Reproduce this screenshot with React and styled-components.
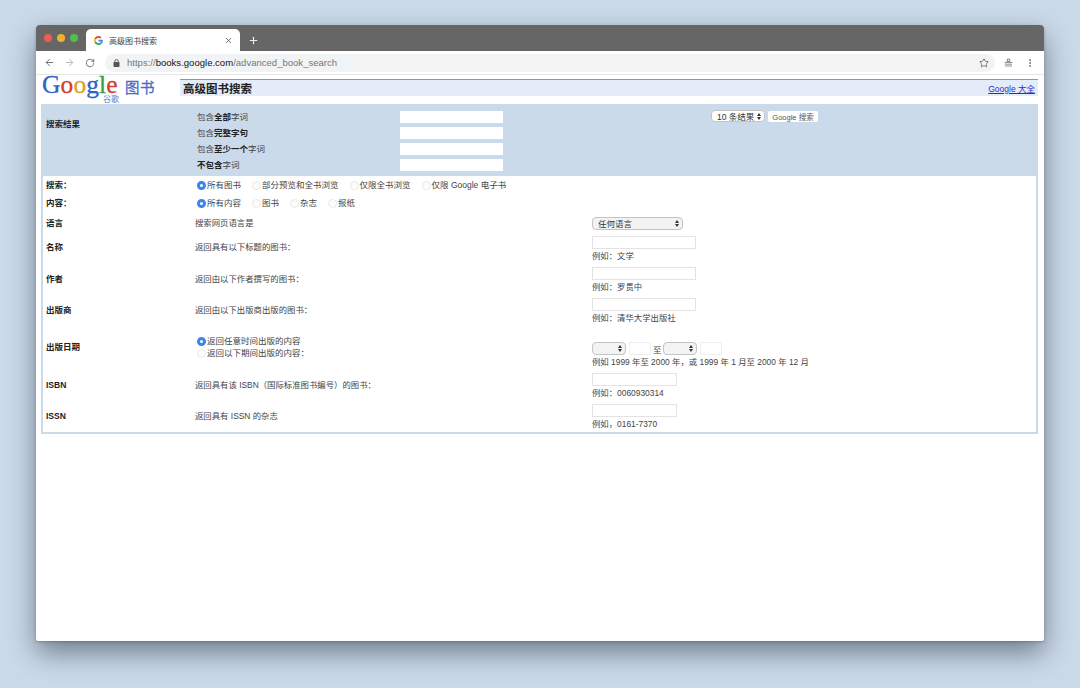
import React from "react";
import styled, { createGlobalStyle } from "styled-components";
import { ArrowLeft, ArrowRight, RotateCw, Star, X, Plus, EllipsisVertical } from "lucide-react";

const GlobalStyle = createGlobalStyle`
  html, body {
    margin: 0;
    height: 688px;
    overflow: hidden;
    background: #cbdae9;
    font-family: "Liberation Sans", "Noto Sans CJK SC", sans-serif;
  }
`;

const Page = styled.div`
  padding: 25px 36px 0;
`;

const Window = styled.div`
  width: 1008px;
  height: 616px;
  background: #fff;
  border-radius: 4px 4px 2px 2px;
  overflow: hidden;
  box-shadow: 0 12px 28px rgba(40, 50, 65, 0.55), 0 1px 3px rgba(40, 50, 65, 0.3);
`;

const TitleBar = styled.div`
  height: 26px;
  background: #666;
  display: flex;
  align-items: flex-end;
`;

const Lights = styled.div`
  width: 50px;
  height: 26px;
  display: flex;
  align-items: center;
  gap: 5px;
  padding: 0 0 0 8px;
  box-sizing: border-box;
`;

const Light = styled.span`
  width: 8px;
  height: 8px;
  border-radius: 50%;
  background: ${(props) => props.$color};
`;

const Tab = styled.div`
  width: 154px;
  height: 22px;
  background: #fff;
  border-radius: 5px 5px 0 0;
  display: flex;
  align-items: center;
  padding: 0 7px 0 8px;
  box-sizing: border-box;
  font-size: 8px;
  color: #444;
`;

const TabTitle = styled.span`
  flex: 1;
  margin-left: 6px;
`;

const NewTab = styled.div`
  width: 26px;
  height: 22px;
  display: flex;
  align-items: center;
  justify-content: center;
  color: #eee;
`;

const Toolbar = styled.div`
  height: 24px;
  background: #fff;
  display: flex;
  align-items: center;
  padding-left: 8px;
  border-bottom: 1px solid #e6e6e6;
  box-sizing: border-box;
  color: #666;
`;

const NavButton = styled.span`
  width: ${(props) => props.$w}px;
  display: flex;
  color: ${(props) => props.$color || "#666"};
`;

const Omnibox = styled.div`
  width: 890px;
  height: 18px;
  border-radius: 9px;
  background: #f1f3f4;
  display: flex;
  align-items: center;
  padding: 0 6px 0 8px;
  box-sizing: border-box;
  font-size: 9.5px;
  color: #777;
`;

const Url = styled.span`
  flex: 1;
  margin-left: 7px;
  letter-spacing: 0.02px;
  b {
    font-weight: 400;
    color: #111;
  }
`;

const ToolIcons = styled.div`
  display: flex;
  align-items: center;
  margin-left: 9px;
  gap: 12px;
  color: #666;
`;

const Content = styled.div`
  padding: 3px 6px 0 5px;
`;

const Header = styled.div`
  height: 26px;
  display: flex;
  align-items: flex-start;
`;

const Logo = styled.div`
  width: 138px;
  height: 26px;
  display: flex;
  align-items: flex-start;
  position: relative;
  margin-left: 1px;
`;

const LogoWord = styled.span`
  font-family: "Liberation Serif", serif;
  font-size: 25.5px;
  line-height: 14px;
  letter-spacing: 0.1px;
  width: 83px;
  -webkit-text-stroke: 0.3px;
`;

const LogoLetter = styled.span`
  color: ${(props) => props.$color};
`;

const LogoBooks = styled.span`
  font-size: 14.5px;
  line-height: 20px;
  letter-spacing: 0.5px;
  color: #4a6cc4;
  -webkit-text-stroke: 0.3px;
`;

const LogoSub = styled.span`
  position: absolute;
  left: 61px;
  top: 17px;
  font-size: 8px;
  line-height: 9px;
  color: #4a7fc9;
`;

const TitleBox = styled.div`
  flex: 1;
  height: 17px;
  margin-top: 1px;
  background: #e5ecf9;
  border-top: 1px solid #7d9ac8;
  box-sizing: border-box;
  display: flex;
  align-items: center;
  justify-content: space-between;
  padding: 0 3px 0 3px;
`;

const PageTitle = styled.h1`
  margin: 0;
  font-size: 11.5px;
  font-weight: 700;
  color: #222;
`;

const AllLink = styled.a`
  font-size: 8.5px;
  color: #2a2ad0;
  text-decoration: underline;
`;

const FormBox = styled.div`
  height: 330px;
  border: 2px solid #cbdaea;
  border-top: 0;
  box-sizing: border-box;
`;

const ResultPanel = styled.div`
  height: 72px;
  background: #cbdaea;
  display: grid;
  grid-template-columns: 151px 203px 311px 1fr;
  padding: 5px 0 0 3px;
  box-sizing: border-box;
`;

const PanelTitle = styled.div`
  font-size: 8.5px;
  font-weight: 700;
  line-height: 16px;
  color: #222;
  padding-top: 7px;
`;

const Stack = styled.div`
  display: flex;
  flex-direction: column;
  gap: ${(props) => props.$gap || 0}px;
  padding-top: ${(props) => props.$top || 0}px;
  padding-left: ${(props) => props.$left || 0}px;
`;

const PanelLabel = styled.div`
  height: 16px;
  font-size: 8.5px;
  line-height: 16px;
  color: #444;
  b {
    color: #222;
  }
`;

const PanelInput = styled.input`
  display: block;
  width: 103px;
  height: 12px;
  padding: 0;
  border: 0;
  background: #fff;
`;

const SearchControls = styled.div`
  display: flex;
  align-items: flex-start;
  gap: 3px;
  padding-top: 1px;
`;

const SelectBox = styled.div`
  width: ${(props) => props.$w}px;
  height: ${(props) => props.$h || 13}px;
  box-sizing: border-box;
  border: 1px solid #c4c4c4;
  border-radius: 4px;
  background: ${(props) => (props.$white ? "#fff" : "#f3f3f3")};
  display: flex;
  align-items: center;
  justify-content: space-between;
  padding: 0 3px 0 5px;
  font-size: 8.5px;
  color: #333;
`;

const Updown = styled.span`
  display: flex;
  flex-direction: column;
  gap: 1px;
  margin-left: auto;
  &::before,
  &::after {
    content: "";
    border-left: 2px solid transparent;
    border-right: 2px solid transparent;
  }
  &::before {
    border-bottom: 3px solid #333;
  }
  &::after {
    border-top: 3px solid #333;
  }
`;

const SearchButton = styled.button`
  width: 50px;
  height: 11px;
  margin-top: 1px;
  padding: 0;
  border: 0;
  border-radius: 2px;
  background: #fff;
  font: 7.5px "Liberation Sans", "Noto Sans CJK SC", sans-serif;
  color: #555;
`;

const Row = styled.div`
  height: ${(props) => props.$h}px;
  display: grid;
  grid-template-columns: 149px 397px 1fr;
  align-items: ${(props) => props.$align || "center"};
  padding-left: 3px;
  box-sizing: border-box;
`;

const RowLabel = styled.div`
  font-size: 8.5px;
  line-height: 12px;
  font-weight: 700;
  color: #222;
  padding-top: ${(props) => props.$top || 0}px;
`;

const RowText = styled.div`
  font-size: 8.4px;
  line-height: 12px;
  color: #444;
  padding-top: ${(props) => props.$top || 0}px;
`;

const RadioRow = styled.div`
  display: flex;
  align-items: center;
  gap: 11px;
  padding-left: 2px;
`;

const RadioLabel = styled.label`
  display: flex;
  align-items: center;
  gap: 1px;
  font-size: 8.5px;
  line-height: 12px;
  color: #444;
`;

const Radio = styled.input.attrs({ type: "radio" })`
  appearance: none;
  box-sizing: border-box;
  width: 9px;
  height: 9px;
  margin: 0;
  border-radius: 50%;
  border: 1px solid #e8e8e8;
  background: #fcfcfc;
  &:checked {
    border: 3px solid #3f82ea;
    background: #fff;
  }
`;

const FieldInput = styled.input`
  display: block;
  width: ${(props) => props.$w}px;
  height: 13px;
  padding: 0;
  box-sizing: border-box;
  border: 1px solid #e3e3e3;
  background: #fff;
`;

const Hint = styled.div`
  font-size: 8.4px;
  line-height: 12px;
  margin-top: 1px;
  color: #444;
`;

const DateFields = styled.div`
  display: flex;
  align-items: center;
  gap: 3px;
  font-size: 8.5px;
  color: #444;
`;

const DateInput = styled.input`
  width: ${(props) => props.$w}px;
  height: 13px;
  padding: 0;
  box-sizing: border-box;
  border: 1px solid #efefef;
  background: #fff;
`;

const DateSep = styled.span`
  margin: 0 -2px 0 -1px;
`;

const ControlCell = styled.div`
  padding-top: ${(props) => props.$top || 0}px;
`;

function GoogleG() {
  return (
    <svg width="9" height="9" viewBox="0 0 48 48">
      <path fill="#EA4335" d="M24 9.5c3.5 0 6.7 1.2 9.2 3.600l6.900-6.900C35.900 2.400 30.400 0 24 0 14.600 0 6.500 5.400 2.600 13.200l8 6.200C12.500 13.700 17.800 9.500 24 9.500z" />
      <path fill="#4285F4" d="M46.900 24.500c0-1.600-.1-3.100-.4-4.500H24v9h12.900c-.6 3-2.200 5.500-4.700 7.200l7.700 6c4.500-4.200 7-10.300 7-17.700z" />
      <path fill="#FBBC05" d="M10.500 28.600c-.5-1.400-.8-3-.8-4.600s.3-3.200.8-4.600l-8-6.200C.9 16.500 0 20.100 0 24s.9 7.500 2.600 10.800l7.900-6.200z" />
      <path fill="#34A853" d="M24 48c6.500 0 11.900-2.100 15.900-5.800l-7.700-6c-2.100 1.400-4.900 2.300-8.200 2.300-6.200 0-11.500-4.200-13.400-9.900l-8 6.200C6.500 42.600 14.600 48 24 48z" />
    </svg>
  );
}

function LockIcon() {
  return (
    <svg width="7" height="8" viewBox="0 0 7 8">
      <rect x="0.500" y="3" width="6" height="5" rx="0.800" fill="#555" />
      <path d="M1.800 3.200V2.200a1.700 1.700 0 0 1 3.400 0v1" fill="none" stroke="#555" strokeWidth="0.900" />
    </svg>
  );
}

function ProfileIcon() {
  return (
    <svg width="9" height="9" viewBox="0 0 9 9">
      <path d="M3 3.400 3.500 1h2L6 3.400z" fill="none" stroke="#666" strokeWidth="0.800" />
      <path d="M0.500 4.500h8M1 6.200h7M1 8h7" stroke="#777" strokeWidth="0.800" />
    </svg>
  );
}

const logoLetters = [
  ["G", "#2f62c8"],
  ["o", "#d2402e"],
  ["o", "#d9a32a"],
  ["g", "#2f62c8"],
  ["l", "#3d9a48"],
  ["e", "#d2402e"],
];

const resultFields = [
  <>包含<b>全部</b>字词</>,
  <>包含<b>完整字句</b></>,
  <>包含<b>至少一个</b>字词</>,
  <><b>不包含</b>字词</>,
];

const searchTypes = ["所有图书", "部分预览和全书浏览", "仅限全书浏览", "仅限 Google 电子书"];
const contentTypes = ["所有内容", "图书", "杂志", "报纸"];

const textFields = [
  { label: "名称", text: "返回具有以下标题的图书：", hint: "例如：文学", w: 104, top: 7 },
  { label: "作者", text: "返回由以下作者撰写的图书：", hint: "例如：罗贯中", w: 104, top: 8 },
  { label: "出版商", text: "返回由以下出版商出版的图书：", hint: "例如：清华大学出版社", w: 104, top: 8 },
];

const codeFields = [
  { label: "ISBN", text: "返回具有该 ISBN（国际标准图书编号）的图书：", hint: "例如：0060930314", w: 85, top: 8 },
  { label: "ISSN", text: "返回具有 ISSN 的杂志", hint: "例如，0161-7370", w: 85, top: 8 },
];

function FieldRow({ field }) {
  return (
    <Row $h={31} $align="start">
      <RowLabel $top={field.top}>{field.label}</RowLabel>
      <RowText $top={field.top}>{field.text}</RowText>
      <ControlCell $top={2}>
        <FieldInput $w={field.w} />
        <Hint>{field.hint}</Hint>
      </ControlCell>
    </Row>
  );
}

export default function App() {
  return (
    <Page>
      <GlobalStyle />
      <Window>
        <TitleBar>
          <Lights>
            <Light $color="#ee5d50" />
            <Light $color="#eeb32f" />
            <Light $color="#4fbf4a" />
          </Lights>
          <Tab>
            <GoogleG />
            <TabTitle>高级图书搜索</TabTitle>
            <X size={9} strokeWidth={2} />
          </Tab>
          <NewTab>
            <Plus size={11} strokeWidth={2.4} />
          </NewTab>
        </TitleBar>
        <Toolbar>
          <NavButton $w={20}><ArrowLeft size={11} strokeWidth={2} /></NavButton>
          <NavButton $w={21} $color="#b5b5b5"><ArrowRight size={11} strokeWidth={2} /></NavButton>
          <NavButton $w={20}><RotateCw size={10} strokeWidth={2} /></NavButton>
          <Omnibox>
            <LockIcon />
            <Url>https://<b>books.google.com</b>/advanced_book_search</Url>
            <Star size={10} strokeWidth={1.8} color="#555" />
          </Omnibox>
          <ToolIcons>
            <ProfileIcon />
            <EllipsisVertical size={10} strokeWidth={2.4} />
          </ToolIcons>
        </Toolbar>
        <Content>
          <Header>
            <Logo>
              <LogoWord>
                {logoLetters.map(([letter, color], i) => (
                  <LogoLetter key={i} $color={color}>{letter}</LogoLetter>
                ))}
              </LogoWord>
              <LogoBooks>图书</LogoBooks>
              <LogoSub>谷歌</LogoSub>
            </Logo>
            <TitleBox>
              <PageTitle>高级图书搜索</PageTitle>
              <AllLink href="#">Google 大全</AllLink>
            </TitleBox>
          </Header>
          <FormBox>
            <ResultPanel>
              <PanelTitle>搜索结果</PanelTitle>
              <Stack>
                {resultFields.map((label, i) => (
                  <PanelLabel key={i}>{label}</PanelLabel>
                ))}
              </Stack>
              <Stack $gap={4} $top={2}>
                {resultFields.map((_, i) => (
                  <PanelInput key={i} />
                ))}
              </Stack>
              <SearchControls>
                <SelectBox $w={54} $h={12} $white>10 条结果<Updown /></SelectBox>
                <SearchButton>Google 搜索</SearchButton>
              </SearchControls>
            </ResultPanel>
            <Row $h={18}>
              <RowLabel>搜索：</RowLabel>
              <RadioRow>
                {searchTypes.map((type, i) => (
                  <RadioLabel key={type}>
                    <Radio name="type" defaultChecked={i === 0} />
                    {type}
                  </RadioLabel>
                ))}
              </RadioRow>
            </Row>
            <Row $h={18}>
              <RowLabel>内容：</RowLabel>
              <RadioRow>
                {contentTypes.map((type, i) => (
                  <RadioLabel key={type}>
                    <Radio name="content" defaultChecked={i === 0} />
                    {type}
                  </RadioLabel>
                ))}
              </RadioRow>
            </Row>
            <Row $h={22}>
              <RowLabel>语言</RowLabel>
              <RowText>搜索网页语言是</RowText>
              <SelectBox $w={91}>任何语言<Updown /></SelectBox>
            </Row>
            {textFields.map((field) => (
              <FieldRow key={field.label} field={field} />
            ))}
            <Row $h={44} $align="start">
              <RowLabel $top={14}>出版日期</RowLabel>
              <Stack $top={8} $left={2}>
                <RadioLabel>
                  <Radio name="date" defaultChecked />
                  返回任意时间出版的内容
                </RadioLabel>
                <RadioLabel>
                  <Radio name="date" />
                  返回以下期间出版的内容：
                </RadioLabel>
              </Stack>
              <ControlCell $top={15}>
                <DateFields>
                  <SelectBox $w={34}><Updown /></SelectBox>
                  <DateInput $w={22} />
                  <DateSep>至</DateSep>
                  <SelectBox $w={34}><Updown /></SelectBox>
                  <DateInput $w={22} />
                </DateFields>
                <Hint>例如 1999 年至 2000 年，或 1999 年 1 月至 2000 年 12 月</Hint>
              </ControlCell>
            </Row>
            {codeFields.map((field) => (
              <FieldRow key={field.label} field={field} />
            ))}
          </FormBox>
        </Content>
      </Window>
    </Page>
  );
}
